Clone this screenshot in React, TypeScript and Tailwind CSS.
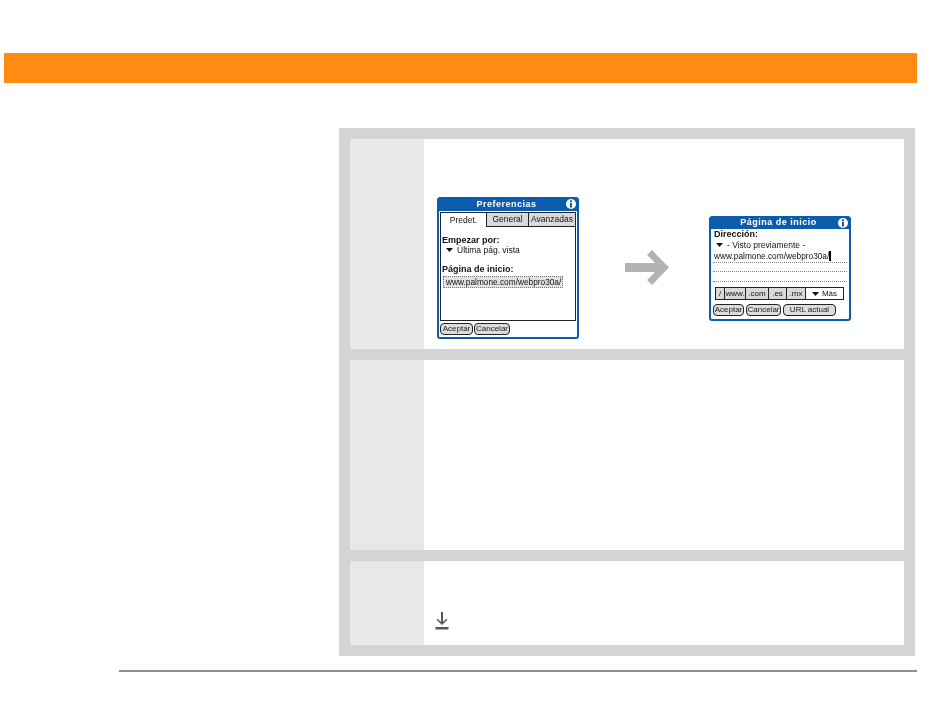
const font = { fontFamily: '"Liberation Sans", Arial, sans-serif' };

function Info() {
  return (
    <svg width="10" height="10" viewBox="0 0 9 9" className="shrink-0">
      <circle cx="4.5" cy="4.5" r="4.5" fill="#fff" />
      <rect x="3.6" y="1.2" width="1.8" height="1.6" fill="#0b5cad" />
      <rect x="3.6" y="3.500" width="1.800" height="4.200" fill="#0b5cad" />
    </svg>
  );
}

function Caret() {
  return (
    <svg width="7" height="4" viewBox="0 0 7 4" className="shrink-0">
      <path d="M0 0h7L3.5 4z" fill="#111" />
    </svg>
  );
}

function TitleBar({ title, h }: { title: string; h: string }) {
  return (
    <div className={`${h} flex items-center rounded-t-[4px] bg-[#0b5cad] pl-[10px] pr-[3px]`}>
      <div className="flex-1 text-center text-[9px] font-bold leading-none tracking-[0.5px] text-white">{title}</div>
      <Info />
    </div>
  );
}

function PalmButton({ children, w }: { children: string; w: string }) {
  return (
    <div className={`${w} flex h-[12px] items-center justify-center rounded-[4px] border border-[#222] bg-[#dcdcdc] text-[8px] leading-none text-[#222]`}>
      {children}
    </div>
  );
}

function Preferencias() {
  return (
    <div className="flex h-[142px] w-[142px] flex-col rounded-t-[4px] rounded-b-[3px] border-x-2 border-b-2 border-[#0b5cad] bg-white text-[#111] blur-[0.35px]">
      <div className="-mx-[2px]"><TitleBar title="Preferencias" h="h-[14px]" /></div>
      <div className="mx-[1px] mt-[1px] h-[109px] border border-[#222]">
        <div className="flex h-[14px] text-[8.5px] leading-none">
          <div className="flex w-[45px] items-center justify-center bg-white">Predet.</div>
          <div className="flex w-[42px] items-center justify-center border-b border-l border-[#222] bg-[#d9d9d9]">General</div>
          <div className="flex flex-1 items-center justify-center border-b border-l border-[#222] bg-[#d9d9d9]">Avanzadas</div>
        </div>
        <div className="mt-[8px] pl-[1px] text-[9px] font-bold leading-[10px]">Empezar por:</div>
        <div className="flex items-center gap-[4px] pl-[5px] text-[8.5px] leading-[10px]">
          <Caret />
          <span>Última pág. vista</span>
        </div>
        <div className="mt-[9px] pl-[1px] text-[9px] font-bold leading-[10px]">Página de inicio:</div>
        <div className="ml-[2px] mt-[2px] flex h-[12px] w-[120px] items-center border border-dotted border-[#777] bg-[#e2e2e2] pl-[2px] text-[8.3px] leading-none">www.palmone.com/webpro30a/</div>
      </div>
      <div className="ml-[1px] mt-[2px] flex gap-[1px]">
        <PalmButton w="w-[33px]">Aceptar</PalmButton>
        <PalmButton w="w-[36px]">Cancelar</PalmButton>
      </div>
    </div>
  );
}

function Inicio() {
  return (
    <div className="flex h-[105px] w-[142px] flex-col rounded-t-[4px] rounded-b-[3px] border-x-2 border-b-2 border-[#0b5cad] bg-white text-[#111] blur-[0.35px]">
      <div className="-mx-[2px]"><TitleBar title="Página de inicio" h="h-[13px]" /></div>
      <div className="pl-[3px] text-[9px] font-bold leading-[10px]">Dirección:</div>
      <div className="mt-[1px] flex items-center gap-[4px] pl-[5px] text-[8.5px] leading-[10px]">
        <Caret />
        <span>- Visto previamente -</span>
      </div>
      <div className="mx-[2px] flex h-[13px] items-end border-b border-dotted border-[#888] pb-[1px] pl-[1px] text-[8.3px] leading-[10px]">
        <span>www.palmone.com/webpro30a/</span>
        <span className="h-[10px] w-[2px] bg-black" />
      </div>
      <div className="mx-[2px] h-[9px] border-b border-dotted border-[#888]" />
      <div className="mx-[2px] h-[10px] border-b border-dotted border-[#888]" />
      <div className="ml-[4px] mr-[5px] mt-[5px] flex h-[13px] border border-[#222] text-[8px] leading-none">
        <div className="flex w-[8px] items-center justify-center bg-[#d9d9d9]">/</div>
        <div className="flex w-[21px] items-center justify-center border-l border-[#222] bg-[#d9d9d9]">www.</div>
        <div className="flex w-[23px] items-center justify-center border-l border-[#222] bg-[#d9d9d9]">.com</div>
        <div className="flex w-[18px] items-center justify-center border-l border-[#222] bg-[#d9d9d9]">.es</div>
        <div className="flex w-[19px] items-center justify-center border-l border-[#222] bg-[#d9d9d9]">.mx</div>
        <div className="flex flex-1 items-center justify-center gap-[3px] border-l border-[#222] bg-white"><Caret />Más</div>
      </div>
      <div className="ml-[2px] mt-[4px] flex gap-[2px]">
        <PalmButton w="w-[31px]">Aceptar</PalmButton>
        <PalmButton w="w-[35px]">Cancelar</PalmButton>
        <PalmButton w="w-[53px]">URL actual</PalmButton>
      </div>
    </div>
  );
}

function Row({ h, children }: { h: string; children?: React.ReactNode }) {
  return (
    <div className={`${h} flex`}>
      <div className="w-[74px] shrink-0 bg-[#e8e8e8]" />
      <div className="flex-1 bg-white">{children}</div>
    </div>
  );
}

export default function App() {
  return (
    <div className="h-[710px] w-[950px] overflow-hidden bg-white pt-[53px]" style={font}>
      <div className="ml-[4px] h-[30px] w-[913px] bg-[#ff8a14]" />
      <div className="ml-[339px] mt-[45px] flex w-[576px] flex-col gap-[11px] bg-[#d4d4d4] p-[11px]">
        <Row h="h-[210px]">
          <div className="flex items-start pl-[13px] pt-[58px]">
            <Preferencias />
            <svg width="46" height="36" viewBox="0 0 46 36" className="ml-[45px] mt-[52px] shrink-0">
              <path d="M1 14h30L23 6l5-5 17 17.500L28 36l-5-5 8-8H1z" fill="#b3b3b3" />
            </svg>
            <div className="ml-[39px] mt-[19px]"><Inicio /></div>
          </div>
        </Row>
        <Row h="h-[190px]" />
        <Row h="h-[84px]">
          <div className="pl-[11px] pt-[51px]">
            <svg width="14" height="18" viewBox="0 0 14 18" className="block">
              <path d="M6 0h2v10l3.300-3.300 1 1L7 13 1.700 7.700l1-1L6 10z" fill="#555" />
              <rect x="0.500" y="15" width="13" height="2.500" fill="#555" />
            </svg>
          </div>
        </Row>
      </div>
      <div className="ml-[119px] mt-[14px] h-[2px] w-[798px] bg-[#8f8f8f]" />
    </div>
  );
}
